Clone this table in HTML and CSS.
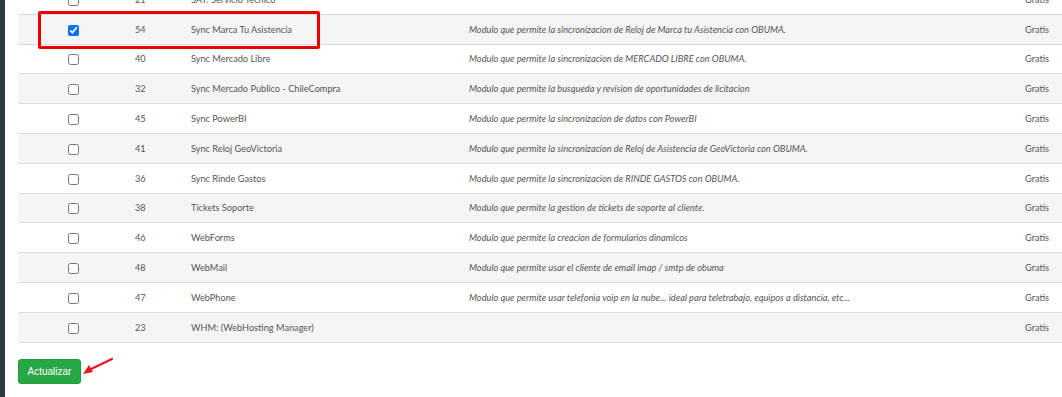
FILE: index.html
```html
<!DOCTYPE html>
<html lang="es">
<head>
<meta charset="utf-8">
<title>Modulos</title>
<link rel="stylesheet" href="styles.css">
</head>
<body>
<div class="page">
  <aside class="sidebar"></aside>
  <main class="content">
    <div class="table">
      <div class="row"><div class="c-check"><input type="checkbox"></div><div class="c-id">21</div><div class="c-name">SAT: Servicio Tecnico</div><div class="c-desc"></div><div class="c-price">Gratis</div></div>
      <div class="row alt"><div class="c-check"><input type="checkbox" checked></div><div class="c-id">54</div><div class="c-name">Sync Marca Tu Asistencia</div><div class="c-desc">Modulo que permite la sincronizacion de Reloj de Marca tu Asistencia con OBUMA.</div><div class="c-price">Gratis</div></div>
      <div class="row"><div class="c-check"><input type="checkbox"></div><div class="c-id">40</div><div class="c-name">Sync Mercado Libre</div><div class="c-desc">Modulo que permite la sincronizacion de MERCADO LIBRE con OBUMA.</div><div class="c-price">Gratis</div></div>
      <div class="row alt"><div class="c-check"><input type="checkbox"></div><div class="c-id">32</div><div class="c-name">Sync Mercado Publico - ChileCompra</div><div class="c-desc">Modulo que permite la busqueda y revision de oportunidades de licitacion</div><div class="c-price">Gratis</div></div>
      <div class="row"><div class="c-check"><input type="checkbox"></div><div class="c-id">45</div><div class="c-name">Sync PowerBI</div><div class="c-desc">Modulo que permite la sincronizacion de datos con PowerBI</div><div class="c-price">Gratis</div></div>
      <div class="row alt"><div class="c-check"><input type="checkbox"></div><div class="c-id">41</div><div class="c-name">Sync Reloj GeoVictoria</div><div class="c-desc">Modulo que permite la sincronizacion de Reloj de Asistencia de GeoVictoria con OBUMA.</div><div class="c-price">Gratis</div></div>
      <div class="row"><div class="c-check"><input type="checkbox"></div><div class="c-id">36</div><div class="c-name">Sync Rinde Gastos</div><div class="c-desc">Modulo que permite la sincronizacion de RINDE GASTOS con OBUMA.</div><div class="c-price">Gratis</div></div>
      <div class="row alt"><div class="c-check"><input type="checkbox"></div><div class="c-id">38</div><div class="c-name">Tickets Soporte</div><div class="c-desc">Modulo que permite la gestion de tickets de soporte al cliente.</div><div class="c-price">Gratis</div></div>
      <div class="row"><div class="c-check"><input type="checkbox"></div><div class="c-id">46</div><div class="c-name">WebForms</div><div class="c-desc">Modulo que permite la creacion de formularios dinamicos</div><div class="c-price">Gratis</div></div>
      <div class="row alt"><div class="c-check"><input type="checkbox"></div><div class="c-id">48</div><div class="c-name">WebMail</div><div class="c-desc">Modulo que permite usar el cliente de email imap / smtp de obuma</div><div class="c-price">Gratis</div></div>
      <div class="row"><div class="c-check"><input type="checkbox"></div><div class="c-id">47</div><div class="c-name">WebPhone</div><div class="c-desc">Modulo que permite usar telefonia voip en la nube... ideal para teletrabajo, equipos a distancia, etc...</div><div class="c-price">Gratis</div></div>
      <div class="row alt last"><div class="c-check"><input type="checkbox"></div><div class="c-id">23</div><div class="c-name">WHM: (WebHosting Manager)</div><div class="c-desc"></div><div class="c-price">Gratis</div></div>
    </div>
    <div class="actions">
      <button class="btn">Actualizar</button>
    </div>
    <div class="highlight"></div>
    <svg class="arrow" width="34" height="20" viewBox="0 0 34 20">
      <line x1="31" y1="2" x2="8" y2="13" stroke="#e8141c" stroke-width="2.2" stroke-linecap="round"/>
      <polygon points="2,17 8,8 12,15" fill="#e8141c"/>
    </svg>
  </main>
</div>
</body>
</html>
```
FILE: styles.css
```css
* { box-sizing: border-box; }
html, body { margin: 0; padding: 0; background: #fff; overflow: hidden; }
body {
  font-family: "Source Sans Pro", Lato, "Noto Sans", sans-serif;
  font-size: 9.2px;
  color: #555;
}
.page {
  display: flex;
  height: 397px;
}
.sidebar {
  width: 5px;
  background: #2b3a41;
  flex: none;
}
.content {
  position: relative;
  flex: 1;
  padding-left: 13px;
}
.table {
  margin-top: -15px;
}
.row {
  display: grid;
  grid-template-columns: 110px 56px 278px 1fr 44px;
  height: 29.8px;
  border-bottom: 1px solid #dcdcdc;
  align-items: center;
  background: #fff;
}
.row.alt { background: #f5f5f5; }
.c-check {
  display: flex;
  justify-content: center;
  align-items: center;
  padding-top: 2px;
}
.c-check input {
  margin: 0;
  width: 11px;
  height: 11px;
  accent-color: #0b73f0;
}
.c-id, .c-name, .c-desc, .c-price { padding-left: 7px; white-space: nowrap; }
.c-desc { font-style: italic; font-size: 9.25px; }
.actions {
  padding-top: 16px;
}
.btn {
  background: #28a745;
  border: 1px solid #24993f;
  border-radius: 3px;
  color: #fff;
  font-family: "Liberation Sans", Arial, sans-serif;
  font-size: 10px;
  height: 25px;
  width: 63px;
  padding: 0;
  cursor: pointer;
}
.highlight {
  position: absolute;
  left: 33px;
  top: 11px;
  width: 282px;
  height: 38px;
  border: 3px solid #ee0000;
  border-radius: 2px;
}
.arrow {
  position: absolute;
  left: 76px;
  top: 357px;
}
```
